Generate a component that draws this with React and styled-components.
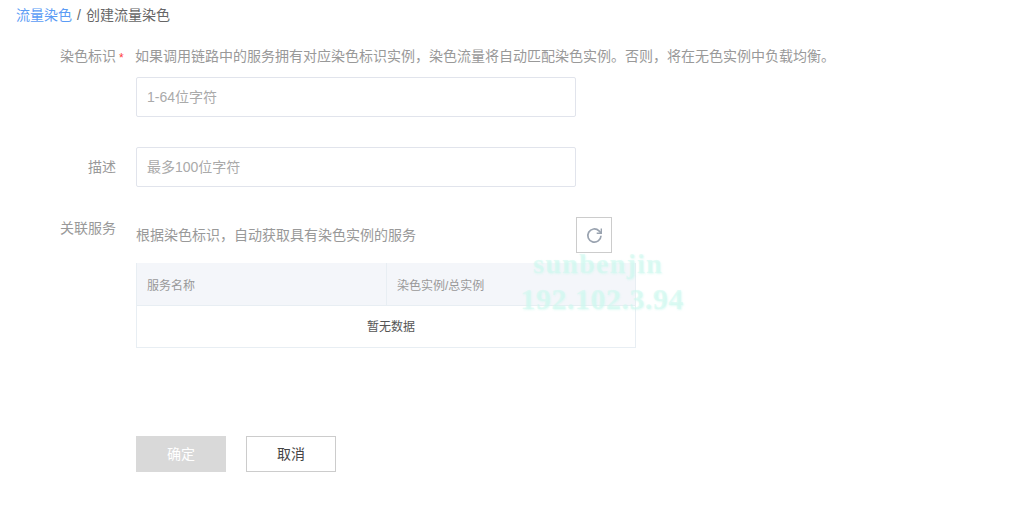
import React from 'react'
import styled, { createGlobalStyle } from 'styled-components'

const GlobalStyle = createGlobalStyle`
  html, body { margin: 0; padding: 0; background: #fff; }
  body { font-family: "Liberation Sans", "Noto Sans CJK SC", sans-serif; font-size: 14px; color: #333; }
`
const Page = styled.div`
  position: relative;
  width: 1021px;
  height: 518px;
  overflow: hidden;
`
const Breadcrumb = styled.div`
  display: flex;
  align-items: center;
  gap: 5px;
  height: 16px;
  padding: 7px 0 0 16px;
  line-height: 16px;
  color: #666;
`
const Crumb = styled.a`
  color: #5b9cf5;
`
const Form = styled.div`
  display: flex;
  flex-direction: column;
  padding-top: 25px;
`
const Row = styled.div`
  display: flex;
  margin-bottom: ${p => p.$mb || 0}px;
`
const Label = styled.label`
  position: relative;
  flex: none;
  width: 116px;
  padding-top: ${p => p.$top || 0}px;
  line-height: 16px;
  text-align: right;
  color: #999;
`
const Star = styled.span`
  position: absolute;
  left: 119px;
  top: 2px;
  color: #ff3b3b;
  font-size: 12px;
`
const Content = styled.div`
  display: flex;
  flex-direction: column;
  margin-left: 20px;
`
const Hint = styled.div`
  height: 29px;
  line-height: 16px;
  color: #999;
  white-space: nowrap;
  margin-left: -1px;
`
const Input = styled.input`
  box-sizing: border-box;
  width: 440px;
  height: 40px;
  padding: 0 10px;
  border: 1px solid #e1e4ec;
  border-radius: 2px;
  outline: none;
  font: inherit;
  color: #333;
  &::placeholder { color: #aaa; opacity: 1; }
`
const ServiceBar = styled.div`
  display: flex;
  align-items: flex-start;
  height: 46px;
`
const ServiceHint = styled.div`
  width: 440px;
  padding-top: 10px;
  line-height: 16px;
  color: #999;
`
const RefreshButton = styled.button`
  display: flex;
  align-items: center;
  justify-content: center;
  box-sizing: border-box;
  width: 36px;
  height: 36px;
  padding: 0;
  background: #fff;
  border: 1px solid #ccc;
`
const Table = styled.div`
  box-sizing: border-box;
  width: 500px;
  border: 1px solid #e8eef3;
  border-top: 0;
`
const TableHead = styled.div`
  display: grid;
  grid-template-columns: 249px 1fr;
  height: 43px;
  background: #f4f6fa;
  border-bottom: 1px solid #e8eef3;
  box-sizing: border-box;
`
const HeadCell = styled.div`
  display: flex;
  align-items: center;
  padding-left: 10px;
  font-size: 12px;
  color: #999;
  & + & { border-left: 1px solid #e8eef3; }
`
const Empty = styled.div`
  height: 41px;
  line-height: 43px;
  padding-left: 10px;
  text-align: center;
  font-size: 12px;
  color: #555;
`
const Actions = styled.div`
  display: flex;
  gap: 20px;
  margin: 88px 0 0 136px;
`
const Button = styled.button`
  box-sizing: border-box;
  width: 90px;
  height: 36px;
  padding: 0 0 2px;
  font: inherit;
  color: ${p => (p.$disabled ? '#fff' : '#444')};
  background: ${p => (p.$disabled ? '#d9d9d9' : '#fff')};
  border: 1px solid ${p => (p.$disabled ? '#d9d9d9' : '#ccc')};
`
const Watermark = styled.div`
  position: absolute;
  left: 500px;
  top: 247px;
  width: 204px;
  text-align: center;
  font-family: "Liberation Serif", serif;
  font-weight: bold;
  color: rgba(205, 248, 238, 0.5);
  text-shadow: 1px 1px 2px rgba(205, 248, 238, 0.6);
  pointer-events: none;
`
const WatermarkLine = styled.div`
  padding-right: ${p => p.$shift || 0}px;
  font-size: ${p => p.$size}px;
  line-height: ${p => p.$height}px;
  letter-spacing: ${p => p.$spacing}px;
`

const RefreshIcon = () => (
  <svg width="17" height="17" viewBox="0 0 17 17" fill="none" stroke="#9aa3b0" strokeWidth="1.7">
    <path d="M15 8.8a6.6 6.6 0 1 1-2-5l2 2" />
    <path d="M15.3 1.4v4.8h-4.6" strokeWidth="1.4" />
  </svg>
)

export default function App() {
  return (
    <Page>
      <GlobalStyle />
      <Breadcrumb>
        <Crumb>流量染色</Crumb>
        <span>/</span>
        <span>创建流量染色</span>
      </Breadcrumb>
      <Form>
        <Row $mb={30}>
          <Label>染色标识<Star>*</Star></Label>
          <Content>
            <Hint>如果调用链路中的服务拥有对应染色标识实例，染色流量将自动匹配染色实例。否则，将在无色实例中负载均衡。</Hint>
            <Input placeholder="1-64位字符" />
          </Content>
        </Row>
        <Row $mb={30}>
          <Label $top={12}>描述</Label>
          <Content>
            <Input placeholder="最多100位字符" />
          </Content>
        </Row>
        <Row>
          <Label $top={3}>关联服务</Label>
          <Content>
            <ServiceBar>
              <ServiceHint>根据染色标识，自动获取具有染色实例的服务</ServiceHint>
              <RefreshButton><RefreshIcon /></RefreshButton>
            </ServiceBar>
            <Table>
              <TableHead>
                <HeadCell>服务名称</HeadCell>
                <HeadCell>染色实例/总实例</HeadCell>
              </TableHead>
              <Empty>暂无数据</Empty>
            </Table>
          </Content>
        </Row>
      </Form>
      <Actions>
        <Button $disabled>确定</Button>
        <Button>取消</Button>
      </Actions>
      <Watermark>
        <WatermarkLine $size={28} $height={34} $spacing={1.3} $shift={8}>sunbenjin</WatermarkLine>
        <WatermarkLine $size={30} $height={36} $spacing={0.5}>192.102.3.94</WatermarkLine>
      </Watermark>
    </Page>
  )
}
